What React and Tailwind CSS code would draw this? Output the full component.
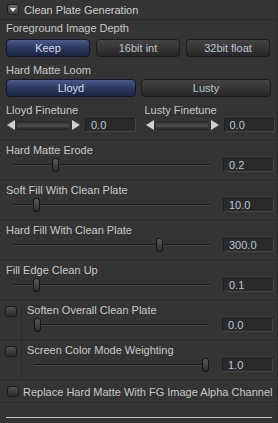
const font = { fontFamily: '"Liberation Sans", Arial, sans-serif' };

const Label = ({ children, className = "" }) => (
  <div className={`text-[11px] leading-[12px] text-[#c9c9c9] whitespace-nowrap ${className}`}>
    {children}
  </div>
);

const ValueBox = ({ value, className = "" }) => (
  <div
    className={`h-[14px] w-[51px] shrink-0 bg-[#2a2a2a] border-t border-l border-[#1f1f1f] border-b border-r border-b-[#474747] border-r-[#474747] pl-[5px] text-[11px] leading-[12px] text-[#b8c8da] ${className}`}
  >
    {value}
  </div>
);

const Handle = ({ pos }) => (
  <div
    className={`absolute top-[-6px] h-[14px] w-[7px] rounded-[3px] border border-[#161616] bg-gradient-to-b from-[#5a5a5a] to-[#2e2e2e] ${pos}`}
  />
);

const Track = ({ pos, className = "" }) => (
  <div className={`relative h-[2px] ${className}`}>
    <div className="h-[1px] bg-[#1c1c1c]" />
    <div className="h-[1px] bg-[#464646]" />
    <Handle pos={pos} />
  </div>
);

const Separator = () => <div className="h-[1px] bg-[#2a2a2a] shadow-[0_1px_0_#3c3c3c]" />;

const SliderGroup = ({ label, value, pos }) => (
  <div>
    <Separator />
    <Label className="pt-[3px] pl-[6px] h-[15px]">{label}</Label>
    <div className="mt-[2px] h-[14px] flex items-center">
      <Track pos={pos} className="ml-[13px] w-[197px]" />
      <ValueBox value={value} className="ml-[13px]" />
    </div>
    <div className="h-[8px]" />
  </div>
);

const Checkbox = () => (
  <div className="h-[11px] w-[12px] rounded-[3px] border border-[#1a1a1a] bg-gradient-to-b from-[#525252] to-[#2c2c2c]" />
);

const CheckSliderGroup = ({ label, value, pos }) => (
  <div>
    <Separator />
    <div className="flex">
      <div className="w-[22px] shrink-0 border-r border-[#2c2c2c] flex justify-center pt-[5px]">
        <Checkbox />
      </div>
      <div className="flex-1">
        <Label className="pt-[3px] pl-[5px] h-[15px]">{label}</Label>
        <div className="mt-[2px] h-[14px] flex items-center">
          <Track pos={pos} className="ml-[12px] w-[175px]" />
          <ValueBox value={value} className="ml-[13px]" />
        </div>
        <div className="h-[8px]" />
      </div>
    </div>
  </div>
);

const Button = ({ children, active, className = "" }) => (
  <div
    className={`h-[18px] rounded-[4px] border flex items-center justify-center text-[11px] leading-[12px] ${
      active
        ? "border-[#141828] bg-gradient-to-b from-[#4c5b88] via-[#2d3961] to-[#1c2442] text-[#d6dcea]"
        : "border-[#1c1c1c] bg-gradient-to-b from-[#454545] via-[#353535] to-[#272727] text-[#b9c6d6]"
    } ${className}`}
  >
    {children}
  </div>
);

const Arrow = ({ dir }) => (
  <svg width="8" height="10" viewBox="0 0 8 10" className="shrink-0">
    {dir === "left" ? (
      <polygon points="8,0 8,10 0,5" fill="#cfcfcf" />
    ) : (
      <polygon points="0,0 0,10 8,5" fill="#cfcfcf" />
    )}
  </svg>
);

const Finetune = ({ label, className = "" }) => (
  <div className={`w-[139px] ${className}`}>
    <Label className="pt-[7px] pl-[6px] h-[21px]">{label}</Label>
    <div className="h-[14px] flex items-center">
      <div className="ml-[7px]">
        <Arrow dir="left" />
      </div>
      <div className="ml-[2px] h-[9px] w-[52px] rounded-[1px] bg-gradient-to-b from-[#242424] via-[#4e4e4e] to-[#202020]" />
      <div className="ml-[3px]">
        <Arrow dir="right" />
      </div>
      <ValueBox value="0.0" className="ml-[5px]" />
    </div>
  </div>
);

export default function App() {
  return (
    <div style={font} className="w-[278px] h-[423px] bg-[#343434] overflow-hidden border-r border-[#2a2a2a]">
      {/* Header */}
      <div className="h-[20px] flex items-center border-b border-[#2a2a2a]">
        <div className="ml-[7px] h-[11px] w-[12px] rounded-[3px] border border-[#1e1e1e] bg-gradient-to-b from-[#6a6a6a] to-[#3c3c3c] flex items-center justify-center">
          <svg width="6" height="4" viewBox="0 0 6 4">
            <polygon points="0,0 6,0 3,4" fill="#e8e8e8" />
          </svg>
        </div>
        <span className="ml-[5px] text-[11px] leading-[12px] text-[#cfcfcf]">Clean Plate Generation</span>
      </div>

      <Label className="pt-[2px] pl-[6px] h-[19px]">Foreground Image Depth</Label>
      <div className="flex pl-[6px] gap-[6px]">
        <Button active className="w-[84px]">Keep</Button>
        <Button className="w-[84px]">16bit int</Button>
        <Button className="w-[84px]">32bit float</Button>
      </div>

      <Label className="pt-[7px] pl-[6px] h-[22px]">Hard Matte Loom</Label>
      <div className="flex pl-[6px] gap-[5px]">
        <Button active className="w-[130px]">Lloyd</Button>
        <Button className="w-[130px]">Lusty</Button>
      </div>

      <div className="flex">
        <Finetune label="Lloyd Finetune" />
        <Finetune label="Lusty Finetune" />
      </div>
      <div className="h-[8px]" />

      <SliderGroup label="Hard Matte Erode" value="0.2" pos="left-[39px]" />
      <SliderGroup label="Soft Fill With Clean Plate" value="10.0" pos="left-[20px]" />
      <SliderGroup label="Hard Fill With Clean Plate" value="300.0" pos="left-[143px]" />
      <SliderGroup label="Fill Edge Clean Up" value="0.1" pos="left-[20px]" />
      <CheckSliderGroup label="Soften Overall Clean Plate" value="0.0" pos="left-[0px]" />
      <CheckSliderGroup label="Screen Color Mode Weighting" value="1.0" pos="left-[168px]" />

      <Separator />
      <div className="h-[21px] flex items-center">
        <div className="ml-[7px]">
          <Checkbox />
        </div>
        <span className="ml-[4px] text-[11px] leading-[12px] text-[#c9c9c9] whitespace-nowrap">
          Replace Hard Matte With FG Image Alpha Channel
        </span>
      </div>
      <Separator />
      <div className="mt-[14px] ml-[6px] w-[266px] h-[1px] bg-[#c8c8c8]" />
    </div>
  );
}
